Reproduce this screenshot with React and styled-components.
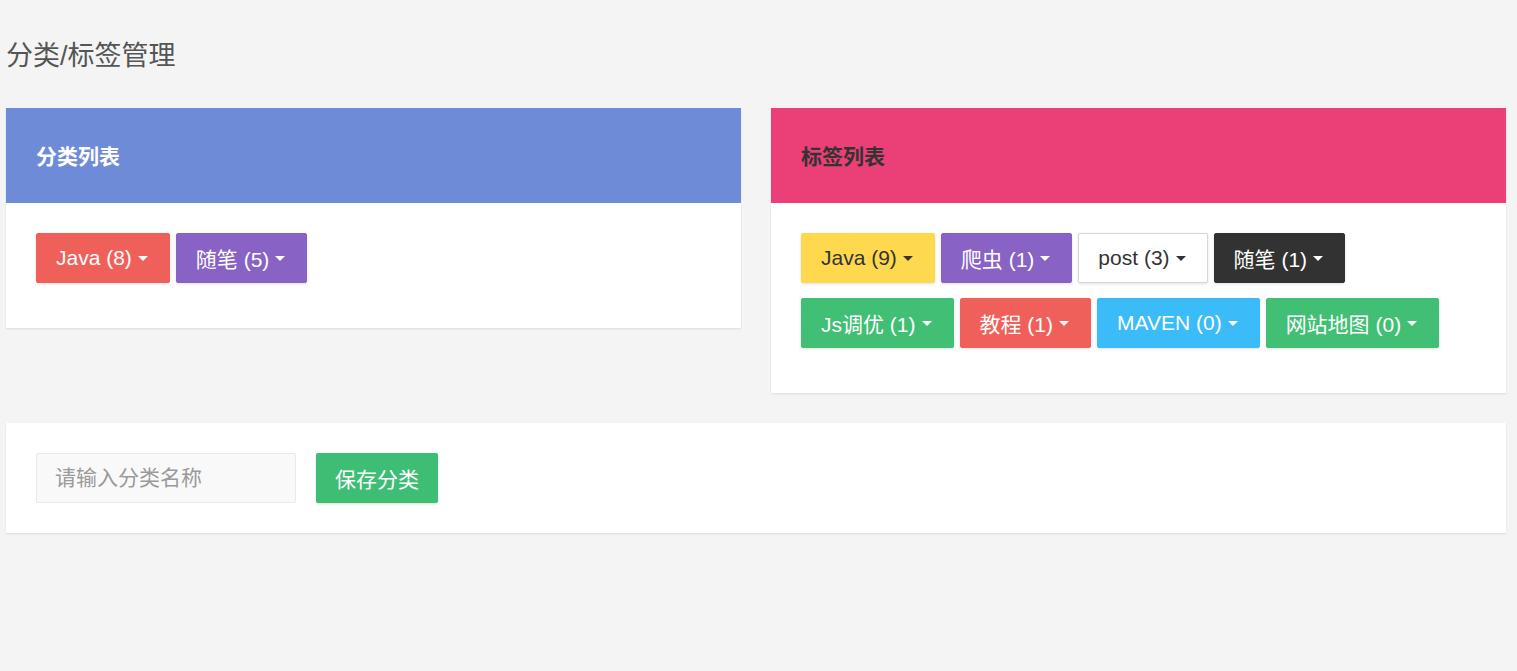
import React from "react";
import styled, { createGlobalStyle } from "styled-components";

const Global = createGlobalStyle`
  html, body { margin: 0; padding: 0; background: #f4f4f4; }
  body { font-family: "Liberation Sans", Arial, "Noto Sans CJK SC", sans-serif; color: #333; }
`;

const Page = styled.div`
  width: 1500px;
  padding: 0 0 0 6px;
`;

const Title = styled.h1`
  margin: 0 0 36px;
  padding: 40px 0 0;
  font-size: 27px;
  font-weight: normal;
  line-height: 32px;
  color: #555;
`;

const Row = styled.div`
  display: flex;
  align-items: flex-start;
  gap: 30px;
  margin-bottom: 30px;
`;

const Card = styled.section`
  flex: 1;
  background: #fff;
  box-shadow: 0 1px 2px rgba(0, 0, 0, 0.1);
`;

const CardHead = styled.div`
  height: 95px;
  display: flex;
  align-items: center;
  padding: 0 30px 2px;
  box-sizing: border-box;
  background: ${(p) => p.$bg};
  color: ${(p) => p.$fg};
  font-size: 21px;
  font-weight: bold;
`;

const CardBody = styled.div`
  padding: 30px 30px 45px;
  display: flex;
  flex-wrap: wrap;
  gap: 15px 6px;
`;

const FormBody = styled.div`
  padding: 30px;
  display: flex;
  gap: 20px;
`;

const Tag = styled.button`
  height: 50px;
  padding: 0 21px 0 19px;
  display: inline-flex;
  align-items: center;
  gap: 6px;
  border: 1px solid ${(p) => p.$border || p.$bg};
  border-radius: 2px;
  background: ${(p) => p.$bg};
  color: ${(p) => p.$fg};
  font-family: inherit;
  font-size: 21px;
  box-shadow: 0 1px 3px rgba(0, 0, 0, 0.12);
  cursor: pointer;
`;

const Caret = styled.span`
  width: 0;
  height: 0;
  border-left: 5.5px solid transparent;
  border-right: 5.5px solid transparent;
  border-top: 5.5px solid currentColor;
  margin-top: 1px;
`;

const Input = styled.input`
  width: 260px;
  height: 50px;
  box-sizing: border-box;
  padding: 0 18px;
  background: #f9f9f9;
  border: 1px solid #e9e9e9;
  border-radius: 2px;
  font-family: inherit;
  font-size: 21px;
  color: #333;
  outline: none;
  &::placeholder { color: #9a9a9a; }
`;

const SaveBtn = styled.button`
  height: 50px;
  padding: 0 19px;
  border: none;
  border-radius: 2px;
  background: #3ebd74;
  color: #fff;
  font-family: inherit;
  font-size: 21px;
  box-shadow: 0 1px 3px rgba(0, 0, 0, 0.15);
  cursor: pointer;
`;

const C = {
  red: { bg: "#f0605a", fg: "#fff" },
  purple: { bg: "#8863c5", fg: "#fff" },
  yellow: { bg: "#fed94d", fg: "#333" },
  white: { bg: "#fff", fg: "#333", border: "#d6d6d6" },
  dark: { bg: "#323232", fg: "#fff" },
  green: { bg: "#41bf74", fg: "#fff" },
  cyan: { bg: "#3bbbf7", fg: "#fff" },
};

const categories = [
  ["Java (8)", "red"],
  ["随笔 (5)", "purple"],
];

const tags = [
  ["Java (9)", "yellow"],
  ["爬虫 (1)", "purple"],
  ["post (3)", "white"],
  ["随笔 (1)", "dark"],
  ["Js调优 (1)", "green"],
  ["教程 (1)", "red"],
  ["MAVEN (0)", "cyan"],
  ["网站地图 (0)", "green"],
];

function TagBtn({ label, kind }) {
  const c = C[kind];
  return (
    <Tag $bg={c.bg} $fg={c.fg} $border={c.border}>
      {label}
      <Caret />
    </Tag>
  );
}

export default function App() {
  return (
    <>
      <Global />
      <Page>
        <Title>分类/标签管理</Title>
        <Row>
          <Card>
            <CardHead $bg="#6d8bd7" $fg="#fff">分类列表</CardHead>
            <CardBody>
              {categories.map(([l, k]) => (
                <TagBtn key={l} label={l} kind={k} />
              ))}
            </CardBody>
          </Card>
          <Card>
            <CardHead $bg="#eb3f77" $fg="#333">标签列表</CardHead>
            <CardBody>
              {tags.map(([l, k]) => (
                <TagBtn key={l} label={l} kind={k} />
              ))}
            </CardBody>
          </Card>
        </Row>
        <Row>
          <Card>
            <FormBody>
              <Input placeholder="请输入分类名称" />
              <SaveBtn>保存分类</SaveBtn>
            </FormBody>
          </Card>
        </Row>
      </Page>
    </>
  );
}
